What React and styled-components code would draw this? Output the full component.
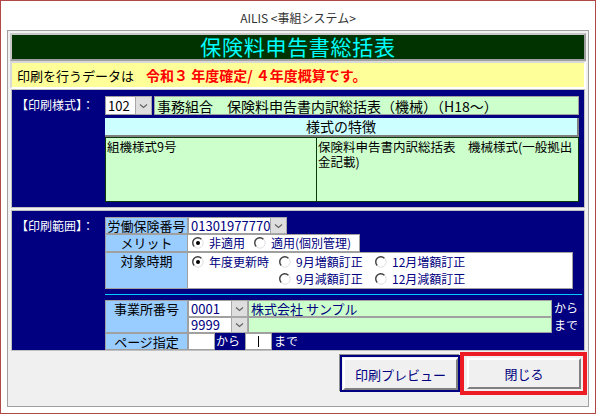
import React from 'react'
import styled, { createGlobalStyle } from 'styled-components'

const GlobalStyle = createGlobalStyle`
  html, body { margin: 0; padding: 0; background: #fff; }
  body { font-family: "Noto Sans CJK JP", "Liberation Sans", sans-serif; }
  * { box-sizing: border-box; }
`

const Window = styled.div`
  width: 596px;
  height: 414px;
  border: 1px solid #b04848;
  background: #fff;
  display: flex;
  flex-direction: column;
`
const Caption = styled.div`
  height: 29px;
  padding-top: 3px;
  display: flex;
  align-items: center;
  justify-content: center;
  font-size: 12px;
  color: #333;
`
const Client = styled.div`
  flex: 1;
  margin: 0 6px 6px;
  border: 1px solid #a0a0a0;
  background: #f0f0f0;
  padding: 2px 2px 0;
  display: flex;
  flex-direction: column;
`
const TitleBar = styled.div`
  height: 28px;
  border: 2px solid;
  border-color: #c8c8c8 #a0a0a0 #a0a0a0 #c8c8c8;
  background: #003300;
  color: #00ffff;
  font-size: 21px;
  line-height: 23px;
  text-align: center;
  letter-spacing: 0.7px;
`
const Notice = styled.div`
  height: 28px;
  border: 2px solid;
  border-color: #d8d8d8 #fff #fff #d8d8d8;
  background: #ffff99;
  padding-left: 5px;
  display: flex;
  align-items: center;
  font-size: 13px;
  color: #000;
`
const NoticeStrong = styled.span`
  margin-left: 12px;
  color: #ff0000;
  font-weight: bold;
  font-size: 14px;
`
const Panel = styled.div`
  background: #000080;
  border: 1px solid #c0c0c0;
  margin: ${p => p.$top || 0}px 1px 0;
  height: ${p => p.$h}px;
  padding: ${p => p.$pad};
  display: flex;
`
const PanelLabel = styled.div`
  width: 93px;
  flex: none;
  padding-left: 4px;
  color: #fff;
  font-size: 12px;
  line-height: 17px;
  white-space: nowrap;
`
const PanelBody = styled.div`
  flex: 1;
  min-width: 0;
  display: flex;
  flex-direction: column;
`
const Line = styled.div`
  display: flex;
  height: ${p => p.$h}px;
  margin-top: ${p => p.$mt || 0}px;
  gap: ${p => p.$gap || 0}px;
`
const ComboWrap = styled.div`
  display: flex;
  flex: none;
  height: 100%;
`
const ComboText = styled.div`
  width: ${p => p.$w}px;
  background: #fff;
  border: 1px solid #a0a0a0;
  border-right: none;
  padding-left: 2px;
  font-size: 13px;
  line-height: 14px;
  color: ${p => p.$color};
  display: flex;
  align-items: center;
  white-space: nowrap;
`
const DropBtn = styled.div`
  width: 17px;
  background: #dedede;
  border: 1px solid #a8a8a8;
  display: flex;
  align-items: center;
  justify-content: center;
`
const GreenField = styled.div`
  flex: 1;
  min-width: 0;
  background: #ccffcc;
  border: 1px solid #a0a0a0;
  padding-left: 2px;
  font-size: ${p => p.$size || 13}px;
  line-height: ${p => (p.$size || 13) + 2}px;
  color: ${p => p.$color || '#000'};
  display: flex;
  align-items: center;
  white-space: nowrap;
`
const Features = styled.div`
  margin-top: 3px;
  display: flex;
  flex-direction: column;
`
const FeatHeader = styled.div`
  height: 19px;
  background: #ccffff;
  border-right: 2px solid #808080;
  border-bottom: 2px solid #808080;
  font-size: 14px;
  line-height: 17px;
  text-align: center;
`
const FeatBody = styled.div`
  height: 65px;
  display: grid;
  grid-template-columns: 210px 1fr;
  background: #ccffcc;
  border: 1px solid #0a3a0a;
`
const FeatCell = styled.div`
  font-size: 12.5px;
  line-height: 15px;
  padding: 1px 1px 0;
  color: #000;
  border-left: ${p => (p.$divide ? '1px solid #0a3a0a' : 'none')};
`
const FieldLabel = styled.div`
  width: 83px;
  flex: none;
  height: ${p => p.$h || 'auto'};
  background: #99ccff;
  border: 1px solid #a0a0a0;
  font-size: 13px;
  line-height: 15px;
  text-align: center;
  color: #000;
  white-space: nowrap;
`
const WhiteBox = styled.div`
  width: ${p => p.$w}px;
  flex: none;
  background: #fff;
  border: 1px solid #a0a0a0;
  border-left: none;
  padding-left: 4px;
  display: ${p => (p.$grid ? 'grid' : 'flex')};
  grid-template-columns: 87px 96px auto;
  grid-auto-rows: 17px;
  align-items: center;
  align-content: start;
`
const PlainBox = styled.div`
  width: 27px;
  flex: none;
  background: #fff;
  border: 1px solid #a0a0a0;
  display: flex;
  align-items: center;
  justify-content: center;
`
const Caret = styled.span`
  width: 1px;
  height: 11px;
  background: #000;
`
const Option = styled.div`
  display: flex;
  align-items: center;
  gap: 5px;
  width: ${p => (p.$w ? `${p.$w}px` : 'auto')};
  font-size: 12px;
  line-height: 14px;
  color: #000080;
  white-space: nowrap;
`
const Separator = styled.div`
  height: 1px;
  margin: 5px 0;
  background: #00ccff;
`
const Stack = styled.div`
  flex: 1;
  min-width: 0;
  display: flex;
  flex-direction: column;
`
const SideText = styled.div`
  width: ${p => p.$w || 30}px;
  flex: none;
  padding-left: ${p => p.$pl || 2}px;
  color: #fff;
  font-size: 12px;
  line-height: 15px;
  white-space: nowrap;
`
const ButtonRow = styled.div`
  display: flex;
  justify-content: flex-end;
  align-items: flex-start;
  padding-top: 1px;
  margin-right: -1px;
`
const FocusFrame = styled.div`
  margin-top: 3px;
  border: 2px solid #000080;
  box-shadow: -1px -1px 0 #909090;
  padding: 1px 0 0 1px;
`
const MarkFrame = styled.div`
  border: 4px solid #ed1c24;
  padding: 2px 2px 2px 3px;
`
const Button = styled.button`
  width: ${p => p.$w}px;
  height: ${p => p.$h}px;
  margin: 0;
  padding: 0;
  background: #f0f0f0;
  border: 2px solid;
  border-color: #fff #808080 #808080 #fff;
  font-family: inherit;
  font-size: 13px;
  color: #000080;
  cursor: pointer;
`

const Chevron = () => (
  <svg width="9" height="6" viewBox="0 0 9 6">
    <path d="M1 1.5 L4.5 4.5 L8 1.5" fill="none" stroke="#606060" strokeWidth="1.1" />
  </svg>
)

const Radio = ({ on }) => (
  <svg width="12" height="12" viewBox="0 0 12 12">
    <circle cx="6" cy="6" r="5.2" fill="#fff" stroke="#e0e0e0" />
    <path d="M2.2 9.4 A5 5 0 0 1 9.4 2.2" fill="none" stroke="#404040" strokeWidth="1.4" />
    {on && <circle cx="6" cy="6" r="2" fill="#000" />}
  </svg>
)

const Combo = ({ w, value, color = '#000' }) => (
  <ComboWrap>
    <ComboText $w={w} $color={color}>{value}</ComboText>
    <DropBtn><Chevron /></DropBtn>
  </ComboWrap>
)

export default function App() {
  return (
    <>
      <GlobalStyle />
      <Window>
        <Caption>AILIS &lt;事組システム&gt;</Caption>
        <Client>
          <TitleBar>保険料申告書総括表</TitleBar>
          <Notice>
            印刷を行うデータは
            <NoticeStrong>令和３ 年度確定/ ４年度概算です。</NoticeStrong>
          </Notice>

          <Panel $h={119} $pad="6px 5px 0 0">
            <PanelLabel>【印刷様式】：</PanelLabel>
            <PanelBody>
              <Line $h={19} $gap={2}>
                <Combo w={30} value="102" />
                <GreenField $size={14}>事務組合　保険料申告書内訳総括表（機械）（H18～）</GreenField>
              </Line>
              <Features>
                <FeatHeader>様式の特徴</FeatHeader>
                <FeatBody>
                  <FeatCell>組機様式9号</FeatCell>
                  <FeatCell $divide>
                    保険料申告書内訳総括表　機械様式(一般拠出
                    <br />
                    金記載)
                  </FeatCell>
                </FeatBody>
              </Features>
            </PanelBody>
          </Panel>

          <Panel $top={2} $h={141} $pad="6px 2px 0 0">
            <PanelLabel>【印刷範囲】：</PanelLabel>
            <PanelBody>
              <Line $h={17}>
                <FieldLabel>労働保険番号</FieldLabel>
                <Combo w={82} value="01301977770" color="#000080" />
              </Line>
              <Line $h={18}>
                <FieldLabel>メリット</FieldLabel>
                <WhiteBox $w={172}>
                  <Option $w={62}><Radio on />非適用</Option>
                  <Option><Radio />適用(個別管理)</Option>
                </WhiteBox>
              </Line>
              <Line $h={37}>
                <FieldLabel>対象時期</FieldLabel>
                <WhiteBox $w={385} $grid>
                  <Option><Radio on />年度更新時</Option>
                  <Option><Radio />9月増額訂正</Option>
                  <Option><Radio />12月増額訂正</Option>
                  <span />
                  <Option><Radio />9月減額訂正</Option>
                  <Option><Radio />12月減額訂正</Option>
                </WhiteBox>
              </Line>

              <Separator />

              <Line $h={33}>
                <FieldLabel $h="33px">事業所番号</FieldLabel>
                <Stack>
                  <Line $h={17}>
                    <Combo w={43} value="0001" color="#000080" />
                    <GreenField $color="#000080">株式会社 サンプル</GreenField>
                    <SideText>から</SideText>
                  </Line>
                  <Line $h={16}>
                    <Combo w={43} value="9999" color="#000080" />
                    <GreenField />
                    <SideText>まで</SideText>
                  </Line>
                </Stack>
              </Line>
              <Line $h={17}>
                <FieldLabel>ページ指定</FieldLabel>
                <PlainBox />
                <SideText $w={30} $pl={1}>から</SideText>
                <PlainBox><Caret /></PlainBox>
                <SideText $pl={2}>まで</SideText>
              </Line>
            </PanelBody>
          </Panel>

          <ButtonRow>
            <FocusFrame>
              <Button $w={115} $h={32}>印刷プレビュー</Button>
            </FocusFrame>
            <MarkFrame>
              <Button $w={114} $h={31}>閉じる</Button>
            </MarkFrame>
          </ButtonRow>
        </Client>
      </Window>
    </>
  )
}
